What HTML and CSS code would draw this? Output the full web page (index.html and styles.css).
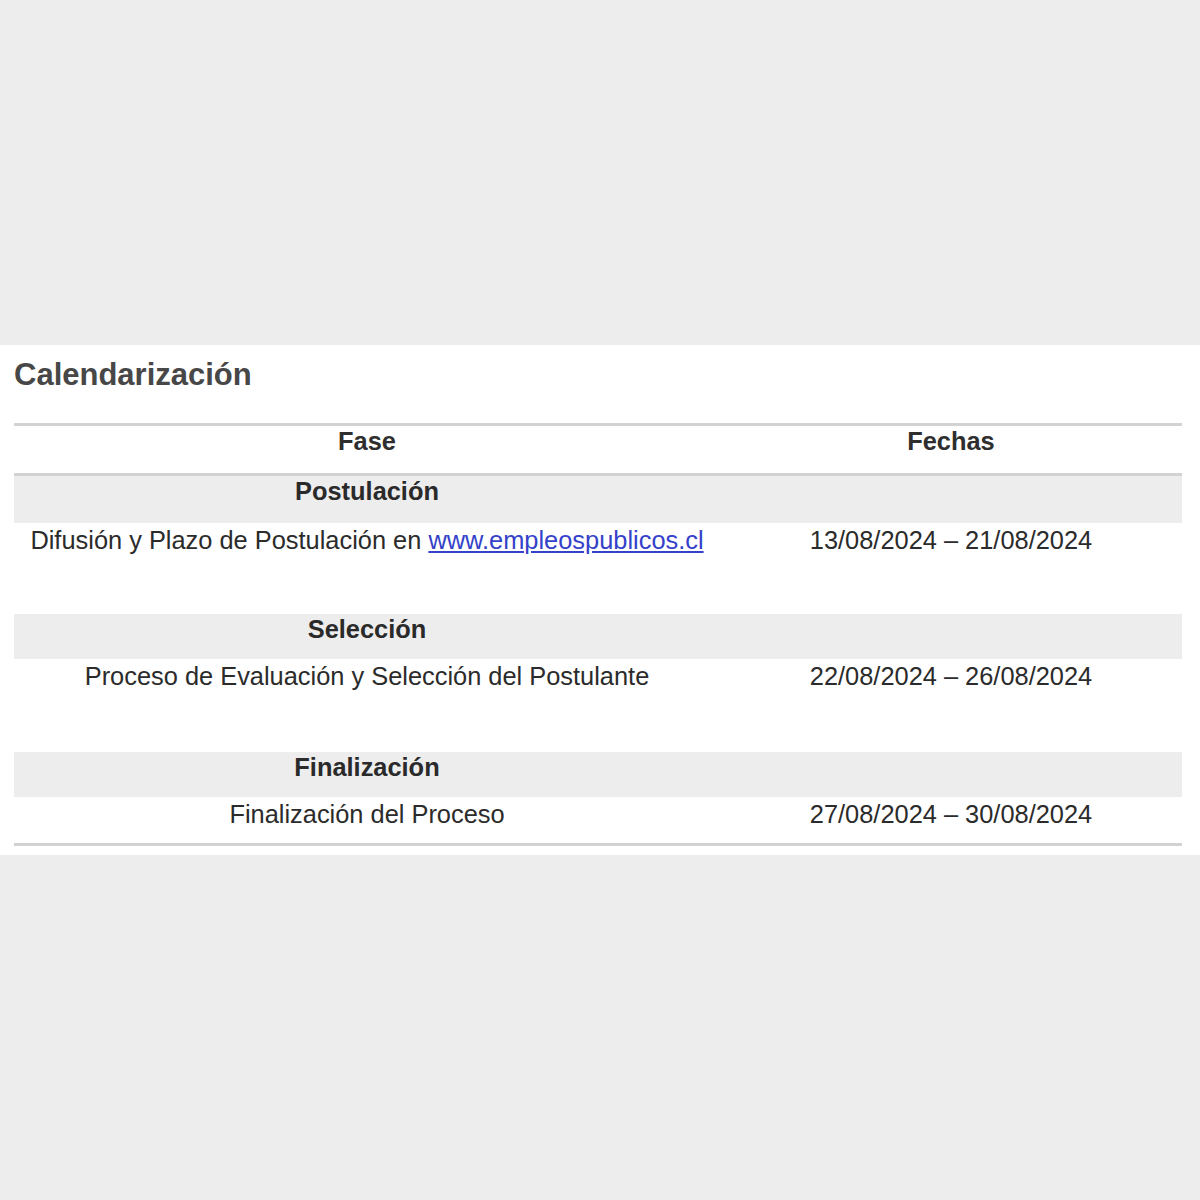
FILE: index.html
```html
<!DOCTYPE html>
<html lang="es">
<head>
<meta charset="utf-8">
<title>Calendarización</title>
<link rel="stylesheet" href="styles.css">
</head>
<body>
<section class="panel">
  <h2 class="title">Calendarización</h2>
  <table class="cal">
    <colgroup><col class="c1"><col class="c2"></colgroup>
    <thead>
      <tr><th>Fase</th><th>Fechas</th></tr>
    </thead>
    <tbody>
      <tr class="phase first"><td>Postulación</td><td></td></tr>
      <tr class="item tall"><td>Difusión y Plazo de Postulación en <a href="#">www.empleospublicos.cl</a></td><td>13/08/2024 – 21/08/2024</td></tr>
      <tr class="phase"><td>Selección</td><td></td></tr>
      <tr class="item tall2"><td>Proceso de Evaluación y Selección del Postulante</td><td>22/08/2024 – 26/08/2024</td></tr>
      <tr class="phase"><td>Finalización</td><td></td></tr>
      <tr class="item last"><td>Finalización del Proceso</td><td>27/08/2024 – 30/08/2024</td></tr>
    </tbody>
  </table>
</section>
</body>
</html>
```
FILE: styles.css
```css
html, body {
  margin: 0;
  padding: 0;
  background: #ededed;
}
body {
  font-family: "Liberation Sans", Arial, sans-serif;
  color: #2b2b2b;
}
.panel {
  margin-top: 345px;
  height: 510px;
  box-sizing: border-box;
  background: #ffffff;
  padding: 12px 18px 0 14px;
}
.title {
  margin: 0;
  font-size: 31px;
  line-height: 36px;
  font-weight: bold;
  color: #474747;
}
.cal {
  margin-top: 30px;
  width: 1168px;
  border-collapse: collapse;
  border-top: 3px solid #d2d2d2;
  border-bottom: 3px solid #d2d2d2;
  font-size: 25.4px;
  line-height: 34px;
}
.c1 { width: 706px; }
.c2 { width: 462px; }
.cal th {
  font-weight: bold;
  color: #2e2e2e;
  text-align: center;
  line-height: 30px;
  padding: 0 0 17px;
  border-bottom: 3px solid #d2d2d2;
}
.cal td {
  text-align: center;
  vertical-align: top;
  padding: 0 0 11px;
}
.phase td {
  background: #ededed;
  font-weight: bold;
  color: #2a2a2a;
  line-height: 31px;
  padding-bottom: 14px;
}
.phase.first td { padding-bottom: 16px; }
.item td { color: #2b2b2b; }
.tall td { padding-bottom: 57px; }
.tall2 td { padding-bottom: 59px; }
.last td { padding-bottom: 12px; }
.cal a {
  color: #3441c9;
  text-decoration: underline;
}
```
